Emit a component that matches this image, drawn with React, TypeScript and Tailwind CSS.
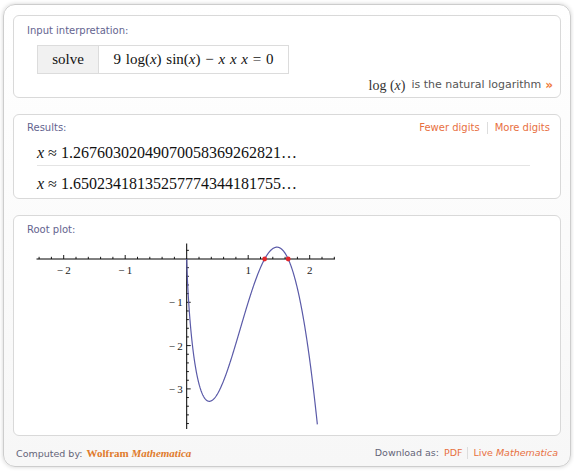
import React from 'react';

const sans = { fontFamily: '"DejaVu Sans", Verdana, sans-serif' };
const serif = { fontFamily: '"Liberation Serif", "Times New Roman", serif' };

// plot scale: origin (150.7, 18) in svg units, 61.5 px per x unit, 43.3 px per y unit
const OX = 150.7;
const OY = 18;
const SX = 61.5;
const SY = 43.3;
const px = (x: number) => OX + SX * x;
const py = (y: number) => OY - SY * y;

function curvePath() {
    const f = (x: number) => 9 * Math.log(x) * Math.sin(x) - x * x * x;
    const pts: string[] = [`M${px(0).toFixed(2)},${py(0).toFixed(2)}`];
    for (let i = 1; i <= 600; i++) {
        const x = 2.13 * Math.pow(i / 600, 1.6);
        const y = f(x);
        if (y < -3.83) break;
        pts.push(`L${px(x).toFixed(2)},${py(y).toFixed(2)}`);
    }
    return pts.join(' ');
}

function RootPlot() {
    const xTicks: number[] = [];
    for (let i = -12; i <= 12; i++) xTicks.push(i / 5);
    const yTicks: number[] = [];
    for (let i = -19; i <= 1; i++) yTicks.push(i / 5);
    return (
        <svg width="300" height="192" viewBox="0 0 300 192" className="block">
            <line x1="0.5" y1={OY} x2="299" y2={OY} stroke="#000" strokeWidth="1" />
            <line x1={OX} y1="2.5" x2={OX} y2="188" stroke="#000" strokeWidth="1" />
            {xTicks.map((t) => {
                const major = Math.abs(t - Math.round(t)) < 1e-6;
                if (Math.abs(t) < 1e-6) return null;
                return (
                    <line key={'x' + t} x1={px(t)} y1={OY} x2={px(t)} y2={OY - (major ? 4 : 2.2)} stroke="#000" strokeWidth="0.9" />
                );
            })}
            {yTicks.map((t) => {
                const major = Math.abs(t - Math.round(t)) < 1e-6;
                if (Math.abs(t) < 1e-6) return null;
                return (
                    <line key={'y' + t} x1={OX} y1={py(t)} x2={OX + (major ? 4 : 2.2)} y2={py(t)} stroke="#000" strokeWidth="0.9" />
                );
            })}
            {[-2, -1, 1, 2].map((t) => (
                <text key={'lx' + t} x={px(t)} y={OY + 15} textAnchor="middle" fontSize="11" fill="#222" style={serif}>
                    {t < 0 ? `\u2212\u2009${-t}` : t}
                </text>
            ))}
            {[-1, -2, -3].map((t) => (
                <text key={'ly' + t} x={OX - 4} y={py(t) + 4} textAnchor="end" fontSize="11" fill="#222" style={serif}>
                    {`\u2212\u2009${-t}`}
                </text>
            ))}
            <path d={curvePath()} fill="none" stroke="#5a5aa8" strokeWidth="1.2" />
            <circle cx={px(1.2676)} cy={OY} r="2.4" fill="#e3262b" />
            <circle cx={px(1.6502)} cy={OY} r="2.4" fill="#e3262b" />
        </svg>
    );
}

function PodTitle({ children }: { children: React.ReactNode }) {
    return (
        <div className="text-[10px] leading-[14px] text-[#64648f]" style={sans}>
            {children}
        </div>
    );
}

const X = () => <i>x</i>;

export default function App() {
    return (
        <div className="w-[574px] h-[471px] bg-white pt-[4px] pl-[3px]">
            <div className="w-[568px] h-[463px] rounded-[12px] border border-[#cdcdcd] bg-gradient-to-b from-white to-[#f7f7f7] shadow-[0_0_4px_rgba(0,0,0,0.18)] px-[9px] pt-[10px] flex flex-col">
                {/* Input interpretation */}
                <div className="h-[83px] rounded-[6px] border border-[#d9d9d9] bg-white pl-[13px] pr-[7px] pt-[8px] flex flex-col">
                    <PodTitle>Input interpretation:</PodTitle>
                    <div className="ml-[10px] mt-[7px] flex h-[29px] w-[252px] border border-[#dcdcdc] text-[15px] text-[#111]" style={serif}>
                        <div className="w-[61px] bg-[#f1f1f1] border-r border-[#dcdcdc] flex items-center justify-center">solve</div>
                        <div className="flex-1 flex items-center justify-center whitespace-pre">
                            <span className="[word-spacing:1px]">
                                9 log(<X />) sin(<X />) − <X /> <X /> <X /> = 0
                            </span>
                        </div>
                    </div>
                    <div className="mt-[4px] flex justify-end items-center h-[14px] whitespace-nowrap">
                        <span className="text-[14px] text-[#333]" style={serif}>
                            log (<X />)
                        </span>
                        <span className="ml-[6px] text-[11px] text-[#555]" style={sans}>is the natural logarithm</span>
                        <span className="ml-[4px] text-[12px] font-bold text-[#f07a3a]" style={sans}>»</span>
                    </div>
                </div>

                {/* Results */}
                <div className="mt-[16px] h-[85px] rounded-[6px] border border-[#d9d9d9] bg-white pl-[13px] pr-[10px] pt-[6px] flex flex-col">
                    <div className="flex justify-between items-center">
                        <PodTitle>Results:</PodTitle>
                        <div className="flex items-center text-[10px] leading-[14px] text-[#e8703f]" style={sans}>
                            <span>Fewer digits</span>
                            <span className="mx-[7px] h-[12px] w-px bg-[#dddddd]" />
                            <span>More digits</span>
                        </div>
                    </div>
                    <div className="ml-[10px] mr-[20px] text-[16px] text-[#111] whitespace-nowrap" style={serif}>
                        <div className="mt-[6px] h-[25px] leading-[24px] border-b border-[#e4e4e4]">
                            <X /> ≈ 1.26760302049070058369262821…
                        </div>
                        <div className="mt-[6px] h-[24px] leading-[24px]">
                            <X /> ≈ 1.65023418135257774344181755…
                        </div>
                    </div>
                </div>

                {/* Root plot */}
                <div className="mt-[16px] h-[221px] rounded-[6px] border border-[#d9d9d9] bg-white pl-[13px] pt-[7px] flex flex-col">
                    <PodTitle>Root plot:</PodTitle>
                    <div className="ml-[9px] mt-[4px]">
                        <RootPlot />
                    </div>
                </div>

                {/* Footer */}
                <div className="flex-1 flex items-center justify-between pl-[3px] pr-[3px] pt-[4px] text-[9.5px] whitespace-nowrap" style={sans}>
                    <div className="flex items-baseline">
                        <span className="text-[#646478]">Computed by:</span>
                        <span className="ml-[4px] text-[11px] font-bold text-[#e07b2d]" style={serif}>
                            Wolfram <i>Mathematica</i>
                        </span>
                    </div>
                    <div className="flex items-center">
                        <span className="text-[#646478]">Download as:</span>
                        <span className="ml-[5px] text-[#e8703f]">PDF</span>
                        <span className="mx-[5px] h-[12px] w-px bg-[#dddddd]" />
                        <span className="text-[#e8703f]">
                            Live <i>Mathematica</i>
                        </span>
                    </div>
                </div>
            </div>
        </div>
    );
}
